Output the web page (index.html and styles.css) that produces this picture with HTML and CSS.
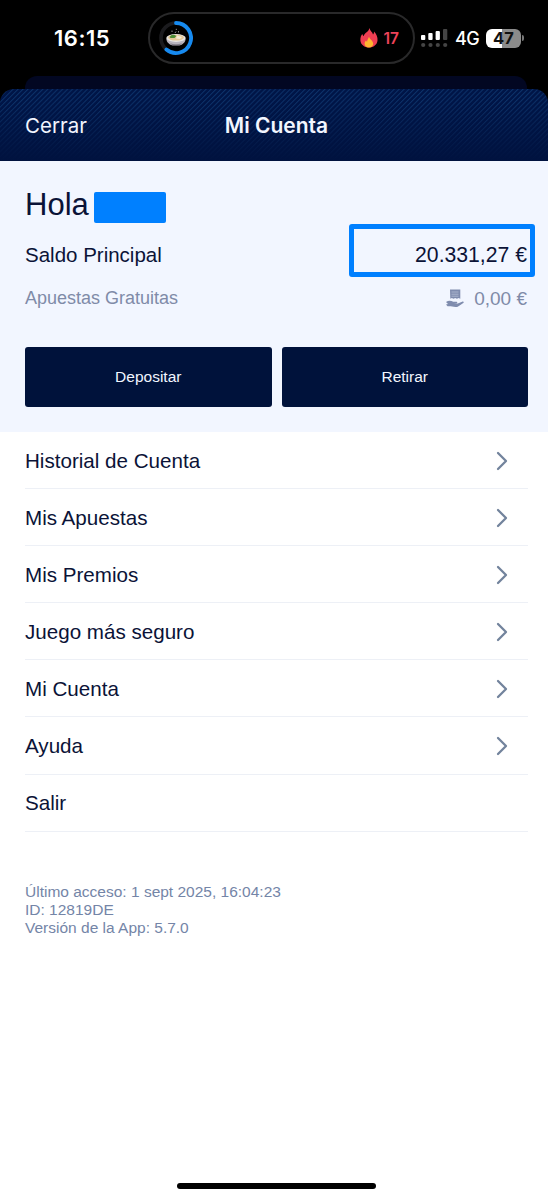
FILE: index.html
```html
<!DOCTYPE html>
<html lang="es">
<head>
<meta charset="utf-8">
<title>Mi Cuenta</title>
<link rel="stylesheet" href="styles.css">
</head>
<body>
<div class="status">
  <div class="clock">16:15</div>
  <div class="island">
    <svg class="ring" width="34" height="34" viewBox="0 0 34 34">
      <circle cx="17" cy="17" r="15" fill="none" stroke="#1b1b1e" stroke-width="3.6"/>
      <path d="M17 2A15 15 0 1 1 7.4 28.5" fill="none" stroke="#168af0" stroke-width="3.8" stroke-linecap="round"/>
      <path d="M7.4 17.5c0 4 3 6 5.6 6.800h8c2.600-.8 5.600-2.800 5.600-6.800z" fill="#b9b4bd"/>
      <path d="M11 22.300q6 2 12 0l-2.500 2.200h-7z" fill="#837d88"/>
      <ellipse cx="17" cy="17" rx="9.700" ry="3.900" fill="#e9e6e3"/>
      <ellipse cx="17" cy="16.600" rx="8" ry="2.900" fill="#e5c898"/>
      <path d="M10.500 16q2-3 5-2l2 1-2 2h-4z" fill="#4d8d35"/>
      <path d="M18 14.500l5 1.500-2 2-4-.5z" fill="#f4ead2"/>
      <path d="M13 11V9.500M16 12l1-1.500M17.300 9V7.800M19.500 11.500V10" stroke="#898989" stroke-width="1"/>
    </svg>
    <div class="streak">
      <svg width="18" height="20" viewBox="0 0 18 20">
        <path d="M9.500 0C10 3 12.500 4 13 6.500c.8-.6 1-1.700 1-3C16.500 6 17.800 9 17.500 12.500c-.4 4.300-4 7-8.500 7S.7 16.800.4 12.500C.2 9.800 1 7.500 2.300 6c.3 1 .7 1.700 1.300 2.200C4.500 4.500 8.800 4 9.500 0z" fill="#f03e52"/>
        <path d="M9 8.800c.5 2.300 4.200 3.900 4.200 7 0 2.300-1.900 3.700-4.300 3.700s-4.300-1.400-4.300-3.700c0-1.500.8-2.500 1.500-3.200.2.700.5 1 1 1.200C7 11.800 8.500 10.800 9 8.800z" fill="#fdb52f"/>
      </svg>
      <span>17</span>
    </div>
  </div>
  <svg class="signal" width="27" height="19" viewBox="0 0 27 19">
    <g fill="#fff"><rect x="0" y="6" width="4.300" height="5" rx="1"/><rect x="7.300" y="4" width="4.300" height="7" rx="1"/><rect x="14.600" y="2" width="4.300" height="9" rx="1"/></g>
    <g fill="#454545"><rect x="22" y="0" width="4.300" height="11" rx="1"/><circle cx="2.200" cy="16" r="2.100"/><circle cx="9.500" cy="16" r="2.100"/><circle cx="16.800" cy="16" r="2.100"/><circle cx="24.200" cy="16" r="2.100"/></g>
  </svg>
  <span class="network">4G</span>
  <div class="battery">47</div>
  <i class="battery-tip"></i>
</div>
<div class="back-sheet"></div>
<header class="header">
  <span class="close">Cerrar</span>
  <h1 class="title">Mi Cuenta</h1>
</header>
<section class="summary">
  <div class="greeting"><span>Hola</span><i class="name-block"></i></div>
  <div class="balance"><span>Saldo Principal</span><div class="amount">20.331,27 €</div></div>
  <div class="free">
    <span class="free-label">Apuestas Gratuitas</span>
    <svg width="18" height="19" viewBox="0 0 18 19">
      <path d="M4 .4h10.300v9.400l-1.700-.8-1.700.8-1.700-.8-1.700.8-1.700-.8-1.500.8z" fill="#7f8cae"/>
      <path d="M5.500 3h7M5.500 5.200h7M5.500 7.200h7" stroke="#b5bfd5" stroke-width=".8"/>
      <path d="M0 13c2.500-1.600 5-1.400 7.200-.2h3.300c1 0 1.100 1.200.1 1.400l-2.800.3h4l4.300-1.800c1.400-.5 2.300.4 1.200 1.200l-4.800 3.300c-1.700 1.200-4.200.9-6.400.3-1.700-.5-3-.4-4.600-.2L0 15.500l2-.6z" fill="#7f8cae"/>
    </svg>
    <span class="free-value">0,00 €</span>
  </div>
  <div class="actions"><button>Depositar</button><button>Retirar</button></div>
</section>
<nav class="menu">
  <a class="item"><span>Historial de Cuenta</span><svg class="chev" viewBox="0 0 12 20"><path d="M2 2l8 8-8 8"/></svg></a>
  <a class="item"><span>Mis Apuestas</span><svg class="chev" viewBox="0 0 12 20"><path d="M2 2l8 8-8 8"/></svg></a>
  <a class="item"><span>Mis Premios</span><svg class="chev" viewBox="0 0 12 20"><path d="M2 2l8 8-8 8"/></svg></a>
  <a class="item"><span>Juego más seguro</span><svg class="chev" viewBox="0 0 12 20"><path d="M2 2l8 8-8 8"/></svg></a>
  <a class="item"><span>Mi Cuenta</span><svg class="chev" viewBox="0 0 12 20"><path d="M2 2l8 8-8 8"/></svg></a>
  <a class="item"><span>Ayuda</span><svg class="chev" viewBox="0 0 12 20"><path d="M2 2l8 8-8 8"/></svg></a>
  <a class="item"><span>Salir</span></a>
</nav>
<footer class="info">
  <div class="access">Último acceso: 1 sept 2025, 16:04:23</div>
  <div>ID: 12819DE</div>
  <div>Versión de la App: 5.7.0</div>
</footer>
<div class="home"></div>
</body>
</html>
```
FILE: styles.css
```css
* { box-sizing: border-box; }
body {
  margin: 0;
  width: 548px;
  height: 1200px;
  display: flex;
  flex-direction: column;
  overflow: hidden;
  background: linear-gradient(#000 0 140px, #fff 140px);
  color: #0b1337;
  font-family: "Liberation Sans", Arial, sans-serif;
}
svg { display: block; flex: none; }
.status {
  height: 76px;
  flex: none;
  display: flex;
  align-items: center;
  font-family: Inter, sans-serif;
  color: #fff;
}
.clock { width: 94px; margin-left: 54px; font-size: 22px; font-weight: 600; letter-spacing: .5px; }
.island {
  width: 267px;
  height: 52px;
  flex: none;
  display: flex;
  align-items: center;
  justify-content: space-between;
  padding: 0 14px 0 10px;
  border: 2px solid #29292a;
  border-radius: 26px;
}
.streak { display: flex; align-items: center; gap: 6px; font-size: 15.500px; font-weight: 600; color: #ed4359; }
.ring { margin-left: -1px; }
.streak svg { margin-left: -2px; }
.signal { margin-left: 6px; }
.network { margin-left: 7px; font-size: 18px; font-weight: 500; letter-spacing: -.5px; width: 24px; }
.battery {
  width: 35px;
  height: 19px;
  margin-left: 7px;
  border-radius: 6px;
  background: linear-gradient(90deg, #fff 47%, #8b8b8b 47%);
  color: #111;
  font-size: 16.500px;
  font-weight: 700;
  line-height: 19px;
  text-align: center;
}
.battery-tip { width: 2px; height: 6px; margin-left: 1px; border-radius: 0 2px 2px 0; background: #777; }
.back-sheet { flex: none; height: 13px; margin: 0 21px 0 25px; border-radius: 12px 12px 0 0; background: #020722; }
.header {
  flex: none;
  height: 72px;
  display: grid;
  grid-template-columns: 1fr auto 1fr;
  align-items: center;
  padding: 0 20px 0 25px;
  border-radius: 14px 14px 0 0;
  background:
    linear-gradient(transparent 15%, #00123f 100%),
    repeating-linear-gradient(135deg, #001547 0 1.500px, #0c3168 2.300px, #001547 3.500px);
  font-family: Inter, sans-serif;
  color: #f2f6ff;
}
.close { font-size: 20.500px; }
.title { margin: 0; font-size: 21px; font-weight: 600; }
.summary { flex: none; height: 271px; padding: 24px 20px 0 25px; background: #f2f6ff; }
.greeting { display: flex; height: 39px; align-items: center; font-size: 31px; }
.name-block { width: 72px; height: 31px; margin: 5px 0 0 5px; border-radius: 2px; background: #0080ff; }
.balance { display: flex; justify-content: space-between; align-items: center; height: 53px; font-size: 20.500px; margin-right: -7px; }
.amount {
  width: 186px;
  height: 53px;
  border: 5px solid #0080ff;
  border-radius: 3px;
  padding: 4px 3px 0 0;
  text-align: right;
  line-height: 43px;
  font-size: 21.200px;
  white-space: nowrap;
}
.balance > span { padding-top: 8px; }
.free { display: flex; align-items: center; height: 43px; padding-right: 1px; color: #7f8ba8; font-size: 18px; }
.free-label { flex: 1; }
.free-value { margin-left: 10px; font-size: 19px; }
.actions { display: grid; grid-template-columns: 1fr 1fr; gap: 10px; margin-top: 27px; }
.actions button {
  height: 60px;
  border: 0;
  border-radius: 3px;
  background: #00123b;
  color: #f2f6ff;
  font: 15.500px "Liberation Sans", Arial, sans-serif;
}
.menu { flex: none; background: #fff; padding: 0 20px 0 25px; }
.item {
  display: flex;
  align-items: center;
  justify-content: space-between;
  height: 57.100px;
  padding: 1px 20px 0 0;
  border-bottom: 1px solid #edf0f6;
  font-size: 20.600px;
}
.chev { width: 12px; height: 20px; fill: none; stroke: #72839c; stroke-width: 2.300; stroke-linecap: round; stroke-linejoin: round; }
.info { padding: 51.500px 25px 0; font-size: 15.500px; line-height: 18px; color: #7485a7; }
.home { width: 199px; height: 6px; margin: auto auto 11px 177px; border-radius: 3px; background: #000; }
```
